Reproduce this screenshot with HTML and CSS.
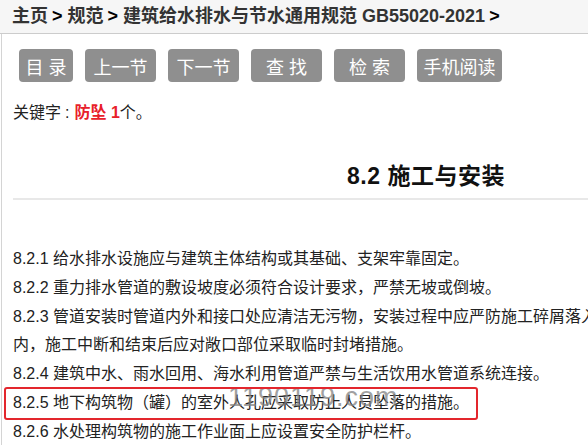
FILE: index.html
```html
<!DOCTYPE html>
<html lang="zh-CN">
<head>
<meta charset="utf-8">
<title>8.2 施工与安装</title>
<link rel="stylesheet" href="styles.css">
</head>
<body>
<div class="crumbs">
  <a class="crumb">主页</a><span class="sep">&gt;</span><a class="crumb">规范</a><span class="sep">&gt;</span><a class="crumb">建筑给水排水与节水通用规范 GB55020-2021</a><span class="sep last">&gt;</span>
</div>
<div class="main">
  <div class="toolbar">
    <a class="btn btn-s">目 录</a>
    <a class="btn">上一节</a>
    <a class="btn">下一节</a>
    <a class="btn">查 找</a>
    <a class="btn">检 索</a>
    <a class="btn btn-l">手机阅读</a>
  </div>
  <div class="keyword">关键字<span class="colon">:</span><span class="hit">防坠 1</span>个。</div>
  <div class="article">
    <h2 class="title">8.2 施工与安装</h2>
    <div class="rule"></div>
    <div class="clauses">
      <p>8.2.1 给水排水设施应与建筑主体结构或其基础、支架牢靠固定。</p>
      <p>8.2.2 重力排水管道的敷设坡度必须符合设计要求，严禁无坡或倒坡。</p>
      <p>8.2.3 管道安装时管道内外和接口处应清洁无污物，安装过程中应严防施工碎屑落入管道内，施工中断和结束后应对敞口部位采取临时封堵措施。</p>
      <p>8.2.4 建筑中水、雨水回用、海水利用管道严禁与生活饮用水管道系统连接。</p>
      <p class="marked">8.2.5 地下构筑物（罐）的室外人孔应采取防止人员坠落的措施。<span class="watermark">1190119.com</span><span class="mark-box"></span></p>
      <p>8.2.6 水处理构筑物的施工作业面上应设置安全防护栏杆。</p>
    </div>
  </div>
</div>
</body>
</html>
```

FILE: styles.css
```css
html, body {
  margin: 0;
  padding: 0;
  background: #fff;
  overflow: hidden;
}
body {
  font-family: "Liberation Sans", "Noto Sans CJK SC", sans-serif;
  color: #222;
  width: 900px;
}
.crumbs {
  height: 33px;
  line-height: 33px;
  background: #f6f6f6;
  border-bottom: 1px solid #cccccc;
  padding-left: 12px;
  font-size: 18px;
  font-weight: bold;
  color: #333;
  white-space: nowrap;
}
.crumb {
  color: #333;
}
.sep {
  color: #000;
  margin: 0 5px 0 4px;
}
.main {
  margin-left: 1px;
  border-left: 1px solid #d4d4d4;
  padding-left: 11px;
  padding-bottom: 40px;
}
.toolbar {
  display: flex;
  gap: 12px;
  padding-top: 15px;
  padding-left: 6px;
}
.btn {
  display: flex;
  align-items: center;
  justify-content: center;
  width: 71px;
  height: 33px;
  background: #8f8f8f;
  color: #fff;
  font-size: 18px;
  border-radius: 4px;
  white-space: pre;
}
.btn-s { width: 54px; }
.btn-l { width: 85px; }
.keyword {
  margin-top: 20px;
  font-size: 16px;
  line-height: 22px;
  color: #222;
}
.colon {
  margin: 0 5px 0 4px;
}
.hit {
  color: #e8202a;
  font-weight: bold;
}
.title {
  margin: 37px 0 0;
  width: 826px;
  text-align: center;
  font-size: 23px;
  line-height: 30px;
  font-weight: bold;
  color: #111;
  letter-spacing: 0.5px;
}
.rule {
  margin-top: 7px;
  height: 2px;
  background: #e8e8e8;
}
.clauses {
  margin-top: 45px;
  max-width: 630px;
}
.clauses p {
  margin: 0;
  font-size: 16px;
  line-height: 28.8px;
  color: #222;
}
.marked {
  position: relative;
}
.mark-box {
  position: absolute;
  left: -9px;
  top: -2px;
  width: 474px;
  height: 33px;
  box-sizing: border-box;
  border: 2.5px solid #e3262d;
  border-radius: 3px;
}
.watermark {
  position: absolute;
  left: 215px;
  top: -7px;
  font-size: 27px;
  line-height: 30px;
  color: rgba(130, 130, 130, 0.75);
  letter-spacing: 1px;
}
```
